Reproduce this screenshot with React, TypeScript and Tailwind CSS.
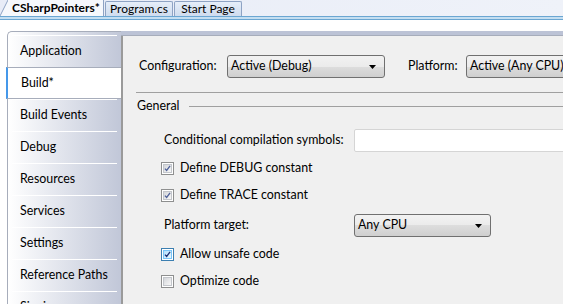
import React from 'react';

const navItems = ['Application', 'Build*', 'Build Events', 'Debug', 'Resources', 'Services', 'Settings', 'Reference Paths', 'Signing'];

const Check: React.FC<{ checked?: boolean; hot?: boolean }> = ({ checked, hot }) => (
  <div
    className={`w-[13px] h-[13px] border ${hot ? 'border-[#3c7fb1]' : 'border-[#8e8f8f]'} bg-white p-px shrink-0`}
  >
    <div
      className={`w-full h-full border ${hot ? 'border-[#79c6f9] bg-gradient-to-br from-[#b1dffd] to-[#e9f7fe]' : 'border-[#c3c6cb] bg-gradient-to-br from-[#d4d6da] to-[#f8f8f8]'} flex items-center justify-center`}
    >
      {checked && (
        <svg width="9" height="9" viewBox="0 0 9 9">
          <path
            d="M1.2 4.6 L3.4 7 L7.8 1.2"
            fill="none"
            stroke={hot ? '#1d3276' : '#4f6199'}
            strokeWidth="1.7"
          />
        </svg>
      )}
    </div>
  </div>
);

const Combo: React.FC<{ value: string; className: string }> = ({ value, className }) => (
  <div
    className={`h-[23px] border border-[#707070] rounded-[3px] bg-[linear-gradient(#f2f2f2_0%,#ebebeb_50%,#dddddd_50%,#cfcfcf_100%)] flex items-center pl-[3px] pr-[8px] shrink-0 ${className}`}
  >
    <span className="flex-1 whitespace-nowrap text-black">{value}</span>
    <svg width="7" height="4" viewBox="0 0 7 4" className="shrink-0">
      <path d="M0 0 H7 L3.5 4 Z" fill="#000" />
    </svg>
  </div>
);

export default function App() {
  return (
    <div className="w-[563px] h-[304px] overflow-hidden bg-white font-['Lato',sans-serif] text-[12.4px] text-black leading-none">
      {/* document tabs */}
      <div className="h-[16px] flex items-end bg-gradient-to-r from-[#e8ecf7] to-[#eff2f9] text-[12px]">
        <svg width="8" height="16" viewBox="0 0 8 16" className="shrink-0">
          <polygon points="0,16 8,0 8,16" fill="#f6f8fc" />
          <line x1="0" y1="16" x2="8" y2="0" stroke="#8ea3c4" strokeWidth="1" />
        </svg>
        <div className="h-[16px] w-[96px] bg-[#f6f8fc] border-r border-[#8ea3c4] flex items-center pl-[4px] font-bold">
          CSharpPointers*
        </div>
        <div className="h-[15px] w-[68px] ml-px bg-gradient-to-b from-[#e6eef9] to-[#cfdcee] border border-b-0 border-[#8ea3c4] rounded-t-[2px] flex items-center justify-center">
          Program.cs
        </div>
        <div className="h-[15px] w-[68px] ml-px bg-gradient-to-b from-[#e6eef9] to-[#cfdcee] border border-b-0 border-[#8ea3c4] rounded-t-[2px] flex items-center justify-center">
          Start Page
        </div>
      </div>
      <div className="h-[4px] border-y border-[#6ba6d2] bg-[#c4def1]" />
      <div className="h-[11px] bg-white" />

      <div className="flex h-[273px]">
        {/* left navigation */}
        <div className="ml-[7px] w-[114px] h-full border-l border-t border-[#a7adbb] rounded-tl-[5px] bg-gradient-to-r from-white to-[#c1c7d8] pt-[3px] shrink-0">
          {navItems.map((item) =>
            item === 'Build*' ? (
              <div
                key={item}
                className="h-[32px] -ml-[2px] bg-white border-y border-[#a7adbb] border-l-2 border-l-[#4598ea] flex items-center pl-[13px]"
              >
                {item}
              </div>
            ) : (
              <div key={item} className="h-[32px] flex flex-col">
                <div className="h-px mx-[4px] bg-white" />
                <div className="flex-1 flex items-center pl-[12px]">{item}</div>
              </div>
            )
          )}
        </div>

        {/* property page */}
        <div className="flex-1 flex flex-col min-w-0">
          <div className="h-[5px] bg-[#bcc3d6] border-b border-[#a7adbb]" />
          <div className="flex-1 bg-[#f0f0f0] border-l-2 border-[#9a9a9a] flex flex-col">
            <div className="mt-[19px] h-[23px] flex items-center pl-[16px]">
              <span className="w-[88px] shrink-0">Configuration:</span>
              <Combo value="Active (Debug)" className="w-[158px]" />
              <span className="ml-[23px] w-[58px] shrink-0">Platform:</span>
              <Combo value="Active (Any CPU)" className="w-[150px]" />
            </div>
            <div className="mt-[14px] ml-[13px] h-px bg-[#a0a0a0]" />
            <div className="mt-[6px] h-[14px] flex items-center pl-[14px]">
              <span className="shrink-0">General</span>
              <div className="ml-[10px] flex-1 h-px bg-[#a0a0a0]" />
            </div>
            <div className="mt-[16px] h-[23px] flex items-center pl-[41px]">
              <span className="w-[190px] shrink-0">Conditional compilation symbols:</span>
              <div className="w-[240px] h-[23px] bg-white border border-[#d5d5d5] rounded-[2px] shrink-0" />
            </div>
            <div className="mt-[6px] h-[20px] flex items-center pl-[38px] gap-[6px]">
              <Check checked />
              <span>Define DEBUG constant</span>
            </div>
            <div className="mt-[7px] h-[20px] flex items-center pl-[38px] gap-[6px]">
              <Check checked />
              <span>Define TRACE constant</span>
            </div>
            <div className="mt-[9px] h-[23px] flex items-center pl-[41px]">
              <span className="w-[190px] shrink-0">Platform target:</span>
              <Combo value="Any CPU" className="w-[137px]" />
            </div>
            <div className="mt-[7px] h-[20px] flex items-center pl-[38px] gap-[6px]">
              <Check checked hot />
              <span>Allow unsafe code</span>
            </div>
            <div className="mt-[7px] h-[20px] flex items-center pl-[38px] gap-[6px]">
              <Check />
              <span>Optimize code</span>
            </div>
          </div>
        </div>
      </div>
    </div>
  );
}
